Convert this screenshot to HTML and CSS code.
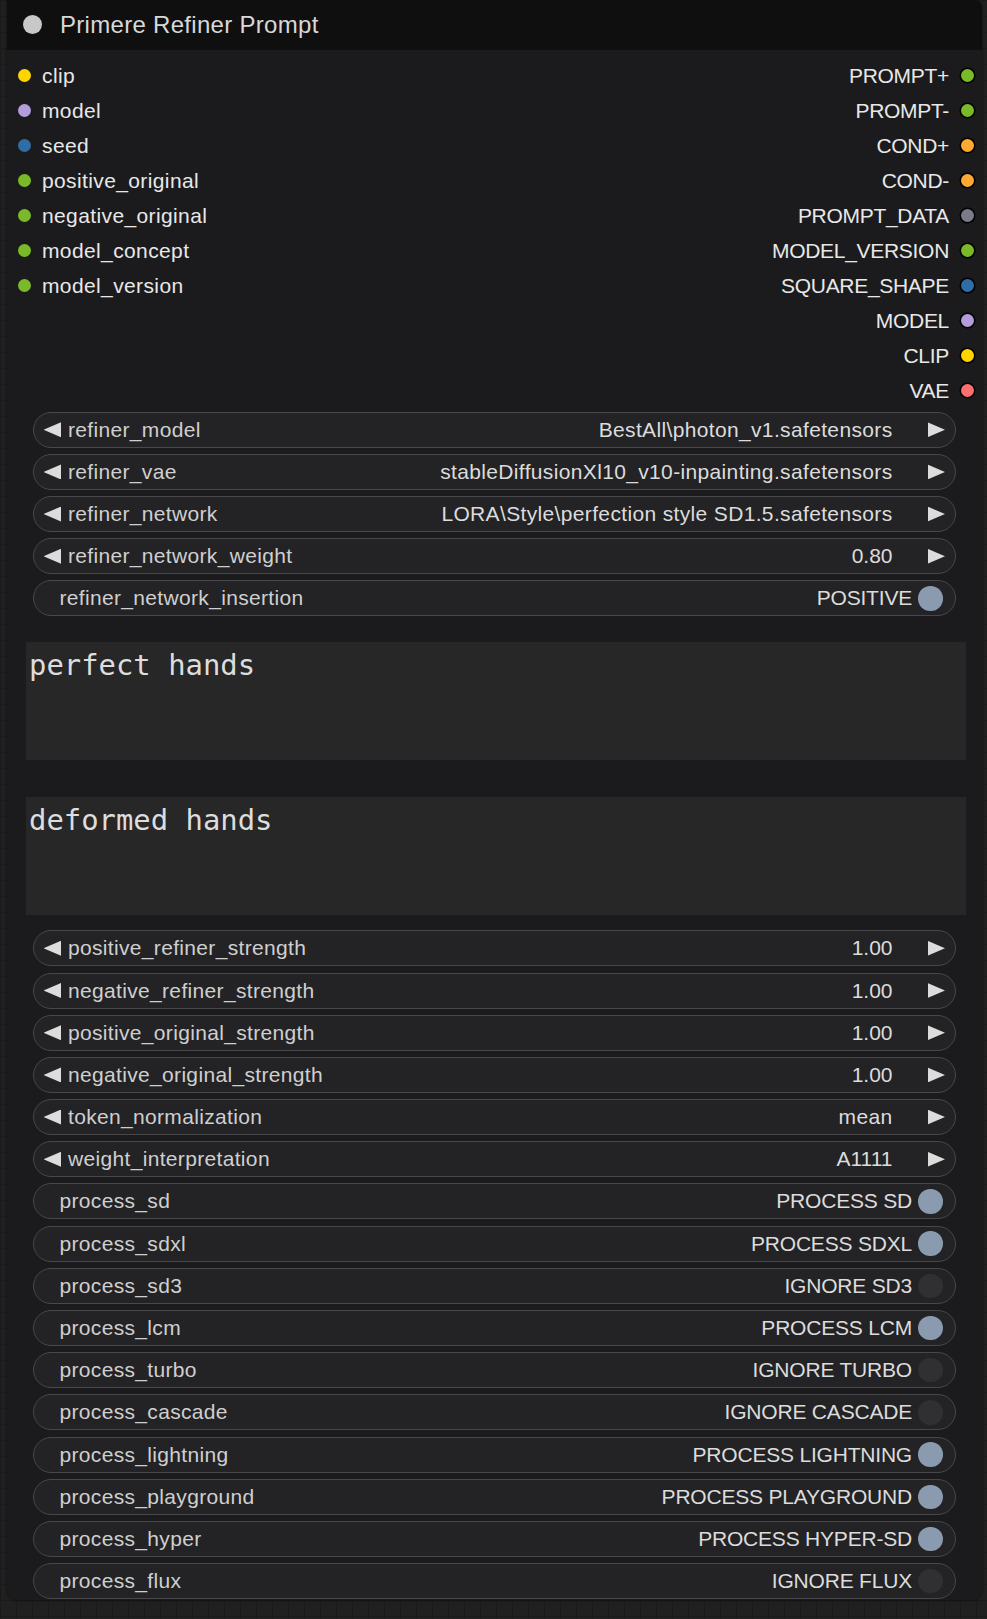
FILE: index.html
```html
<!DOCTYPE html>
<html>
<head>
<meta charset="utf-8">
<title>Primere Refiner Prompt</title>
<link rel="stylesheet" href="styles.css">
</head>
<body>
<div class="canvas">
  <div class="node">
    <div class="title">
      <span class="title-dot"></span>
      <span class="title-text">Primere Refiner Prompt</span>
    </div>
    <div class="slots">
      <div class="inputs">
        <div class="slot"><span class="dot c-yellow"></span><span>clip</span></div>
        <div class="slot"><span class="dot c-lav"></span><span>model</span></div>
        <div class="slot"><span class="dot c-blue"></span><span>seed</span></div>
        <div class="slot"><span class="dot c-green"></span><span>positive_original</span></div>
        <div class="slot"><span class="dot c-green"></span><span>negative_original</span></div>
        <div class="slot"><span class="dot c-green"></span><span>model_concept</span></div>
        <div class="slot"><span class="dot c-green"></span><span>model_version</span></div>
      </div>
      <div class="outputs">
        <div class="slot"><span>PROMPT+</span><span class="dot o c-green"></span></div>
        <div class="slot"><span>PROMPT-</span><span class="dot o c-green"></span></div>
        <div class="slot"><span>COND+</span><span class="dot o c-orange"></span></div>
        <div class="slot"><span>COND-</span><span class="dot o c-orange"></span></div>
        <div class="slot"><span>PROMPT_DATA</span><span class="dot o c-gray"></span></div>
        <div class="slot"><span>MODEL_VERSION</span><span class="dot o c-green"></span></div>
        <div class="slot"><span>SQUARE_SHAPE</span><span class="dot o c-blue"></span></div>
        <div class="slot"><span>MODEL</span><span class="dot o c-lav"></span></div>
        <div class="slot"><span>CLIP</span><span class="dot o c-yellow"></span></div>
        <div class="slot"><span>VAE</span><span class="dot o c-red"></span></div>
      </div>
    </div>

    <div class="widgets first">
      <div class="w combo"><span class="arr l"></span><span class="lbl">refiner_model</span><span class="val">BestAll\photon_v1.safetensors</span><span class="arr r"></span></div>
      <div class="w combo"><span class="arr l"></span><span class="lbl">refiner_vae</span><span class="val">stableDiffusionXl10_v10-inpainting.safetensors</span><span class="arr r"></span></div>
      <div class="w combo"><span class="arr l"></span><span class="lbl">refiner_network</span><span class="val">LORA\Style\perfection style SD1.5.safetensors</span><span class="arr r"></span></div>
      <div class="w combo"><span class="arr l"></span><span class="lbl">refiner_network_weight</span><span class="val num">0.80</span><span class="arr r"></span></div>
      <div class="w toggle"><span class="lbl">refiner_network_insertion</span><span class="val caps">POSITIVE</span><span class="knob on"></span></div>
    </div>

    <div class="text-box tb1">perfect hands</div>
    <div class="text-box tb2">deformed hands</div>

    <div class="widgets second">
      <div class="w combo"><span class="arr l"></span><span class="lbl">positive_refiner_strength</span><span class="val num">1.00</span><span class="arr r"></span></div>
      <div class="w combo"><span class="arr l"></span><span class="lbl">negative_refiner_strength</span><span class="val num">1.00</span><span class="arr r"></span></div>
      <div class="w combo"><span class="arr l"></span><span class="lbl">positive_original_strength</span><span class="val num">1.00</span><span class="arr r"></span></div>
      <div class="w combo"><span class="arr l"></span><span class="lbl">negative_original_strength</span><span class="val num">1.00</span><span class="arr r"></span></div>
      <div class="w combo"><span class="arr l"></span><span class="lbl">token_normalization</span><span class="val">mean</span><span class="arr r"></span></div>
      <div class="w combo"><span class="arr l"></span><span class="lbl">weight_interpretation</span><span class="val num">A1111</span><span class="arr r"></span></div>
      <div class="w toggle"><span class="lbl">process_sd</span><span class="val caps">PROCESS SD</span><span class="knob on"></span></div>
      <div class="w toggle"><span class="lbl">process_sdxl</span><span class="val caps">PROCESS SDXL</span><span class="knob on"></span></div>
      <div class="w toggle"><span class="lbl">process_sd3</span><span class="val caps">IGNORE SD3</span><span class="knob"></span></div>
      <div class="w toggle"><span class="lbl">process_lcm</span><span class="val caps">PROCESS LCM</span><span class="knob on"></span></div>
      <div class="w toggle"><span class="lbl">process_turbo</span><span class="val caps">IGNORE TURBO</span><span class="knob"></span></div>
      <div class="w toggle"><span class="lbl">process_cascade</span><span class="val caps">IGNORE CASCADE</span><span class="knob"></span></div>
      <div class="w toggle"><span class="lbl">process_lightning</span><span class="val caps">PROCESS LIGHTNING</span><span class="knob on"></span></div>
      <div class="w toggle"><span class="lbl">process_playground</span><span class="val caps">PROCESS PLAYGROUND</span><span class="knob on"></span></div>
      <div class="w toggle"><span class="lbl">process_hyper</span><span class="val caps">PROCESS HYPER-SD</span><span class="knob on"></span></div>
      <div class="w toggle"><span class="lbl">process_flux</span><span class="val caps">IGNORE FLUX</span><span class="knob"></span></div>
    </div>
  </div>
</div>
</body>
</html>
```

FILE: styles.css
```css
html, body {
  margin: 0;
  padding: 0;
}
body {
  background-color: #202020;
  background-image:
    linear-gradient(to right, #1a1a1a 1px, transparent 1px),
    linear-gradient(to bottom, #1a1a1a 1px, transparent 1px);
  background-size: 16px 16px;
  font-family: "Liberation Sans", Arial, sans-serif;
  width: 987px;
  height: 1619px;
  overflow: hidden;
}
.canvas {
  padding-left: 7px;
}
.node {
  width: 975px;
  height: 1600px;
  background: #1b1b1d;
  border-radius: 0 8px 10px 10px;
  box-shadow: 0 0 3px rgba(0,0,0,0.6);
  display: flex;
  flex-direction: column;
  overflow: hidden;
}
.title {
  height: 50px;
  flex: none;
  background: #0f0f10;
  display: flex;
  align-items: center;
  padding-left: 16px;
  box-sizing: border-box;
}
.title-dot {
  width: 19px;
  height: 19px;
  border-radius: 50%;
  background: #c8c8c8;
  margin-right: 18px;
  margin-top: -2px;
}
.title-text {
  color: #d8d8d8;
  font-size: 24px;
  letter-spacing: 0.3px;
  margin-top: 0;
}
.slots {
  height: 361.7px;
  flex: none;
  box-sizing: border-box;
  padding-top: 8px;
  display: flex;
  justify-content: space-between;
  font-size: 21px;
  color: #e8e8e8;
}
.inputs, .outputs {
  display: flex;
  flex-direction: column;
}
.inputs .slot {
  padding-left: 11px;
  letter-spacing: 0.38px;
}
.outputs {
  align-items: flex-end;
}
.outputs .slot {
  padding-right: 8px;
  letter-spacing: -0.3px;
}
.slot {
  height: 35px;
  display: flex;
  align-items: center;
}
.dot {
  width: 13px;
  height: 13px;
  border-radius: 50%;
  flex: none;
  margin-right: 11px;
}
.dot.o {
  margin-right: 0;
  margin-left: 12px;
  box-shadow: 0 0 0 1.5px #000;
}
.c-yellow { background: #ffd500; }
.c-lav { background: #b39ddb; }
.c-blue { background: #2f6da6; }
.c-green { background: #7ab928; }
.c-orange { background: #ffa832; }
.c-gray { background: #7a7a8a; }
.c-red { background: #ff6e6e; }

.widgets {
  display: flex;
  flex-direction: column;
  gap: 6.2px;
  margin-left: 26px;
  margin-right: 26px;
  flex: none;
}
.widgets.second {
  margin-top: 15.3px;
}
.w {
  height: 36px;
  box-sizing: border-box;
  border: 1.5px solid #48484b;
  border-radius: 18px;
  background: #232325;
  display: flex;
  align-items: center;
  font-size: 21px;
  color: #d2d2d2;
  white-space: nowrap;
}
.w .lbl {
  flex: 1;
  color: #cfcfcf;
  letter-spacing: 0.33px;
}
.w .val {
  color: #dcdcdc;
  letter-spacing: 0.35px;
}
.w .val.num {
  letter-spacing: 0;
}
.w .val.caps {
  letter-spacing: -0.2px;
}
.combo {
  padding-left: 9.5px;
  padding-right: 10px;
}
.toggle {
  padding-left: 25.5px;
  padding-right: 12.5px;
}
.arr {
  width: 17.5px;
  height: 15px;
  flex: none;
  background: #dcdcdc;
}
.arr.l {
  clip-path: polygon(0 50%, 100% 0, 100% 100%);
  margin-right: 7px;
}
.arr.r {
  clip-path: polygon(0 0, 100% 50%, 0 100%);
  margin-left: 35px;
}
.knob {
  width: 24.5px;
  height: 24.5px;
  border-radius: 50%;
  background: #303032;
  margin-left: 6px;
  flex: none;
}
.knob.on {
  background: #8a9bb0;
}
.text-box {
  flex: none;
  margin-left: 19px;
  width: 940px;
  height: 118px;
  box-sizing: border-box;
  background: #272727;
  color: #dddddd;
  font-family: "DejaVu Sans Mono", "Liberation Mono", monospace;
  font-size: 28.9px;
  padding: 6px 3px 0;
}
.tb1 {
  margin-top: 26px;
}
.tb2 {
  margin-top: 36.6px;
}
```
